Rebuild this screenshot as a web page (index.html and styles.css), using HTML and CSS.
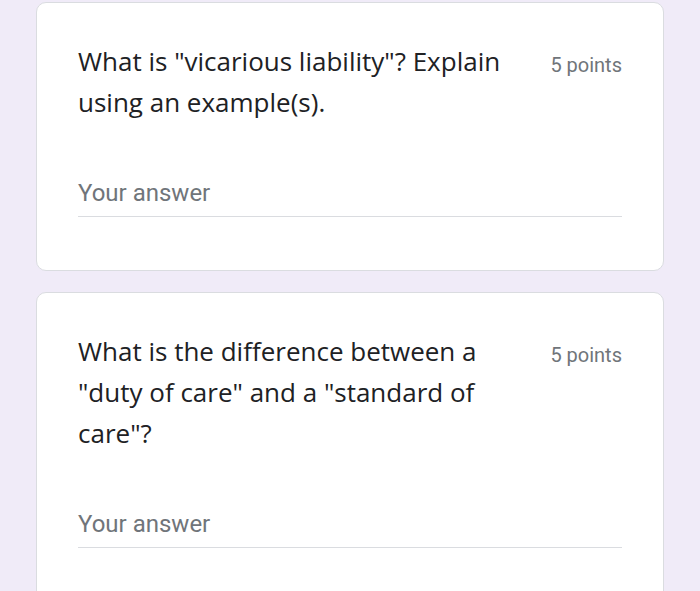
FILE: index.html
```html
<!DOCTYPE html>
<html lang="en">
<head>
<meta charset="utf-8">
<title>Form</title>
<link rel="stylesheet" href="styles.css">
</head>
<body>
<main class="page">
  <section class="card">
    <div class="header">
      <div class="title">What is "vicarious liability"? Explain using an example(s).</div>
      <div class="points">5 points</div>
    </div>
    <div class="answer">Your answer</div>
  </section>
  <section class="card">
    <div class="header">
      <div class="title">What is the difference between a "duty of care" and a "standard of care"?</div>
      <div class="points">5 points</div>
    </div>
    <div class="answer">Your answer</div>
  </section>
</main>
</body>
</html>
```
FILE: styles.css
```css
html, body {
  margin: 0;
  padding: 0;
  background: #f0ebf8;
}
.page {
  padding: 2px 36px 0 36px;
  display: flex;
  flex-direction: column;
  gap: 21px;
}
.card {
  background: #fff;
  border: 1px solid #dadce0;
  border-radius: 10px;
  padding: 38px 41px 53px 41px;
}
.header {
  display: flex;
  justify-content: space-between;
  align-items: flex-start;
  gap: 30px;
}
.title {
  flex: 1;
  font-family: "Open Sans", sans-serif;
  font-size: 26px;
  line-height: 41px;
  color: #202124;
}
.points {
  font-family: Roboto, sans-serif;
  font-size: 20px;
  line-height: 40px;
  padding-top: 4px;
  color: #70757a;
  white-space: nowrap;
}
.answer {
  margin-top: 55px;
  font-family: Roboto, sans-serif;
  font-size: 24px;
  line-height: 30px;
  color: #70757a;
  padding-bottom: 8px;
  border-bottom: 1px solid #dadce0;
}
```
